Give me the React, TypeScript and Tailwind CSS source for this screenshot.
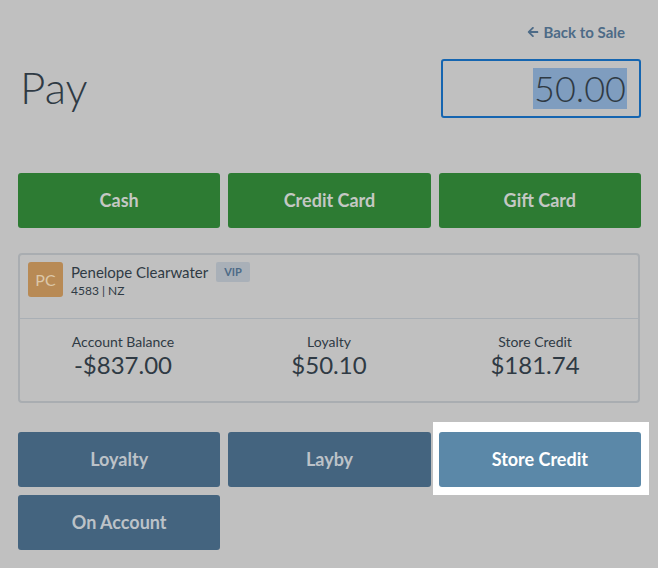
import { FaArrowLeft } from 'react-icons/fa';

const FONT = { fontFamily: 'Lato, "Noto Sans", sans-serif' };

const PAYMENT_TYPES = ['Cash', 'Credit Card', 'Gift Card'];

const STATS = [
  { label: 'Account Balance', value: '-$837.00' },
  { label: 'Loyalty', value: '$50.10' },
  { label: 'Store Credit', value: '$181.74' },
];

export default function App() {
  return (
    <div className="w-[658px] h-[568px] bg-[#c0c0c0] pl-[18px] pr-[17px] text-[#2f3a44] overflow-hidden" style={FONT}>
      {/* back link */}
      <div className="flex justify-end pt-[22px] pr-[16px]">
        <a className="flex items-center gap-[4px] text-[15px] leading-[20px] font-bold text-[#4d6b87]">
          <FaArrowLeft className="w-[12px] h-[12px]" />
          Back to Sale
        </a>
      </div>

      {/* title + amount */}
      <div className="flex items-center justify-between mt-[17px]">
        <h1 className="text-[44px] font-light leading-none pl-[2px] pb-[4px]">Pay</h1>
        <div className="w-[200px] h-[59px] border-2 border-[#1565b0] rounded-[3px] flex items-center justify-end pr-[12px]">
          <span className="bg-[#7f9dbf] text-[36px] font-light leading-[41px] px-[1px]">50.00</span>
        </div>
      </div>

      {/* payment types */}
      <div className="grid grid-cols-3 gap-[8px] mt-[55px]">
        {PAYMENT_TYPES.map((t) => (
          <button
            key={t}
            className="h-[55px] rounded-[3px] bg-[#2d7b33] text-[#c4c8c4] text-[18px] font-bold"
          >
            {t}
          </button>
        ))}
      </div>

      {/* customer card */}
      <div className="mt-[25px] mr-[1px] border-2 border-[#a9adb1] rounded-[4px]">
        <div className="flex items-start gap-[8px] px-[8px] pt-[7px] h-[64px] border-b border-[#a9afb5]">
          <div className="w-[35px] h-[35px] rounded-[3px] bg-[#b88a55] text-[#dcc7a8] text-[16px] flex items-center justify-center">
            PC
          </div>
          <div className="flex flex-col">
            <div className="flex items-center gap-[8px]">
              <span className="text-[15px] leading-[20px]">Penelope Clearwater</span>
              <span className="bg-[#a9b0b8] text-[#4d6b87] text-[11px] font-bold rounded-[2px] px-[8px] h-[20px] flex items-center">
                VIP
              </span>
            </div>
            <span className="text-[12px] leading-[14px] mt-[2px]">4583 | NZ</span>
          </div>
        </div>
        <div className="grid grid-cols-3 pt-[14px] pb-[22px]">
          {STATS.map((s) => (
            <div key={s.label} className="flex flex-col items-center">
              <span className="text-[14px] leading-[18px]">{s.label}</span>
              <span className="text-[24px] leading-[28px]">{s.value}</span>
            </div>
          ))}
        </div>
      </div>

      {/* other payment types */}
      <div className="grid grid-cols-3 gap-[8px] mt-[29px]">
        <button className="h-[55px] rounded-[3px] bg-[#44647f] text-[#bcc2c8] text-[18px] font-bold">Loyalty</button>
        <button className="h-[55px] rounded-[3px] bg-[#44647f] text-[#bcc2c8] text-[18px] font-bold">Layby</button>
        <div className="relative">
          {/* highlighted option */}
          <div className="absolute -left-[6px] -right-[8px] -top-[10px] -bottom-[8px] bg-white" />
          <button className="relative w-full h-[55px] rounded-[3px] bg-[#5b88a8] text-white text-[18px] font-bold">
            Store Credit
          </button>
        </div>
        <button className="h-[55px] rounded-[3px] bg-[#44647f] text-[#bcc2c8] text-[18px] font-bold">On Account</button>
      </div>
    </div>
  );
}
